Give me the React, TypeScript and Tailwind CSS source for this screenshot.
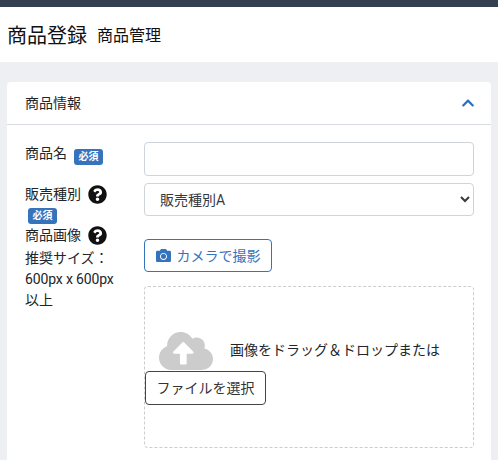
import { FaCamera, FaChevronUp, FaCloudUploadAlt, FaQuestionCircle } from "react-icons/fa";

const fontStack = "font-['Roboto','Noto_Sans_CJK_JP',sans-serif]";

function RequiredBadge() {
  return (
    <span className="inline-flex h-4 w-[29px] items-center justify-center rounded-[3px] bg-[#3574bd] text-[10px] font-bold leading-none text-white">
      必須
    </span>
  );
}

function HelpIcon() {
  return <FaQuestionCircle className="size-[19px] text-[#111111]" />;
}

export default function App() {
  return (
    <div className={`${fontStack} flex h-[460px] w-[498px] flex-col overflow-hidden bg-[#eeeff3] text-[#212529]`}>
      <div className="h-[7px] shrink-0 bg-[#343f4f]" />
      <header className="flex h-[55px] shrink-0 items-center gap-[10px] bg-white pl-[7px] pt-[2px]">
        <h1 className="text-xl font-normal leading-none text-[#111111]">商品登録</h1>
        <p className="text-base leading-none text-[#111111]">商品管理</p>
      </header>

      <section className="mx-[7px] mt-5 flex-1 rounded-t-[4px] bg-white">
        <div className="flex h-[43px] items-center justify-between border-b border-[#d8dbe0] pl-[18px] pr-4">
          <h2 className="text-sm leading-none">商品情報</h2>
          <FaChevronUp className="size-[14px] text-[#2a6fc0]" />
        </div>

        <div className="grid grid-cols-[119px_330px] pl-[18px] pt-[17px] text-sm">
          <div className="flex h-[34px] items-start gap-[7px] pt-px leading-[21px]">
            <span>商品名</span>
            <span className="mt-[2px]">
              <RequiredBadge />
            </span>
          </div>
          <input className="h-[34px] rounded-[4px] border border-[#ced4da] bg-white" />

          <div className="mt-[7px] pt-px leading-[21px]">
            <div className="flex items-center gap-[7px]">
              <span>販売種別</span>
              <HelpIcon />
            </div>
            <div className="ml-[3px] flex h-[19px] items-center pt-[2px]">
              <RequiredBadge />
            </div>
          </div>
          <select
            defaultValue="a"
            className="mt-[7px] h-[33px] rounded-[4px] border border-[#ced4da] bg-white pl-[11px] text-sm text-[#343a40]"
          >
            <option value="a">販売種別A</option>
          </select>

          <div className="pt-px leading-[21px]">
            <div className="flex items-center gap-[7px]">
              <span>商品画像</span>
              <HelpIcon />
            </div>
            <p className="mt-[2px] w-[96px]">推奨サイズ：</p>
            <p className="tracking-[-0.15px]">600px x 600px</p>
            <p>以上</p>
          </div>
          <div className="pt-[15px]">
            <button className="flex h-[33px] w-[128px] items-center justify-center gap-[6px] rounded-[4px] border border-[#3574bd] bg-white text-sm text-[#3574bd]">
              <FaCamera className="size-[15px]" />
              カメラで撮影
            </button>
            <div className="mt-[14px] h-[162px] rounded-[4px] border border-dashed border-[#cccccc] pt-[37px]">
              <div className="flex items-center pl-[14px]">
                <FaCloudUploadAlt className="size-[54px] text-[#cccccc]" />
                <span className="ml-[17px] -mt-[3px] text-sm">画像をドラッグ＆ドロップまたは</span>
              </div>
              <button className="-mt-[7px] block h-[34px] w-[121px] rounded-[4px] border border-[#444444] bg-white text-sm text-[#333333]">
                ファイルを選択
              </button>
            </div>
          </div>
        </div>
      </section>
    </div>
  );
}
